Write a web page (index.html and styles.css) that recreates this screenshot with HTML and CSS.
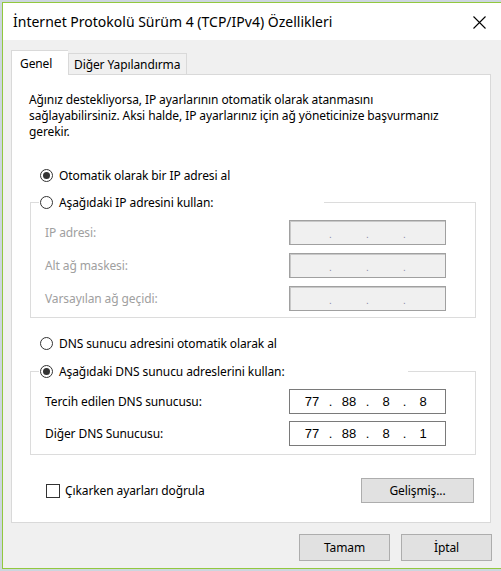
FILE: index.html
```html
<!DOCTYPE html>
<html lang="tr">
<head>
<meta charset="utf-8">
<title>İnternet Protokolü Sürüm 4 (TCP/IPv4) Özellikleri</title>
<link rel="stylesheet" href="styles.css">
</head>
<body>
<div class="window">
  <div class="titlebar">
    <span class="title">İnternet Protokolü Sürüm 4 (TCP/IPv4) Özellikleri</span>
    <svg class="close" width="13" height="13" viewBox="0 0 13 13"><path d="M0.5 0.5L12.5 12.5M12.5 0.5L0.5 12.5" stroke="#000" stroke-width="1.1" fill="none"/></svg>
  </div>
  <div class="client">
    <div class="tabs">
      <div class="tab active">Genel</div>
      <div class="tab">Diğer Yapılandırma</div>
    </div>
    <div class="pane">
      <p class="intro">Ağınız destekliyorsa, IP ayarlarının otomatik olarak atanmasını<br>sağlayabilirsiniz. Aksi halde, IP ayarlarınız için ağ yöneticinize başvurmanız<br>gerekir.</p>

      <label class="radio-row first"><span class="radio checked"></span><span>Otomatik olarak bir IP adresi al</span></label>

      <div class="group-head">
        <span class="seg-left"></span>
        <label class="radio-row legend legend-ip"><span class="radio"></span><span>Aşağıdaki IP adresini kullan:</span></label>
        <span class="seg-right"></span>
      </div>
      <div class="group-body ip-body">
        <div class="field-row disabled"><span>IP adresi:</span><div class="ipbox off"><span class="oct"></span><span class="dot">.</span><span class="oct"></span><span class="dot">.</span><span class="oct"></span><span class="dot">.</span><span class="oct"></span></div></div>
        <div class="field-row disabled"><span>Alt ağ maskesi:</span><div class="ipbox off"><span class="oct"></span><span class="dot">.</span><span class="oct"></span><span class="dot">.</span><span class="oct"></span><span class="dot">.</span><span class="oct"></span></div></div>
        <div class="field-row disabled"><span>Varsayılan ağ geçidi:</span><div class="ipbox off"><span class="oct"></span><span class="dot">.</span><span class="oct"></span><span class="dot">.</span><span class="oct"></span><span class="dot">.</span><span class="oct"></span></div></div>
      </div>

      <label class="radio-row dns-auto"><span class="radio"></span><span>DNS sunucu adresini otomatik olarak al</span></label>

      <div class="group-head dns-head">
        <span class="seg-left"></span>
        <label class="radio-row legend legend-dns"><span class="radio checked"></span><span>Aşağıdaki DNS sunucu adreslerini kullan:</span></label>
        <span class="seg-right"></span>
      </div>
      <div class="group-body dns-body">
        <div class="field-row"><span>Tercih edilen DNS sunucusu:</span><div class="ipbox"><span class="oct">77</span><span class="dot">.</span><span class="oct">88</span><span class="dot">.</span><span class="oct">8</span><span class="dot">.</span><span class="oct">8</span></div></div>
        <div class="field-row"><span>Diğer DNS Sunucusu:</span><div class="ipbox"><span class="oct">77</span><span class="dot">.</span><span class="oct">88</span><span class="dot">.</span><span class="oct">8</span><span class="dot">.</span><span class="oct">1</span></div></div>
      </div>

      <div class="bottom-row">
        <label class="check-row"><span class="checkbox"></span><span>Çıkarken ayarları doğrula</span></label>
        <button class="btn adv">Gelişmiş...</button>
      </div>
    </div>
    <div class="dialog-buttons">
      <button class="btn ok">Tamam</button>
      <button class="btn ok">İptal</button>
    </div>
  </div>
</div>
</body>
</html>
```

FILE: styles.css
```css
* { box-sizing: border-box; }
html, body { margin: 0; padding: 0; }
body {
  width: 501px;
  height: 571px;
  overflow: hidden;
  background: #cdd6df;
  font-family: "Noto Sans", "DejaVu Sans", sans-serif;
  font-size: 12px;
  letter-spacing: -0.1px;
  color: #000;
}
.window {
  margin: 2px 0 0 2px;
  width: 510px;
  height: 567px;
  border-left: 1px solid #92c83e;
  border-top: 1px solid #92c83e;
  border-bottom: 1px solid #92c83e;
  background: #f0f0f0;
}
.titlebar {
  height: 37px;
  background: #fff;
  display: flex;
  align-items: center;
  padding-left: 10px;
  position: relative;
}
.title {
  font-size: 14px;
  letter-spacing: 0;
  margin-top: -1px;
}
.close {
  position: absolute;
  left: 470px;
  top: 13px;
}
.client {
  padding: 10px 0 0 8px;
  width: 490px;
}
.tabs {
  display: flex;
  align-items: flex-end;
  height: 24px;
  position: relative;
  z-index: 1;
}
.tab {
  height: 21px;
  border: 1px solid #d9d9d9;
  border-bottom: none;
  background: #f0f0f0;
  padding: 2px 6px 0 5px;
  white-space: nowrap;
}
.tab.active {
  height: 25px;
  width: 57px;
  background: #fff;
  padding: 4px 0 0 8px;
  border-right: none;
  margin-bottom: -1px;
}
.pane {
  width: 480px;
  height: 449px;
  border: 1px solid #d9d9d9;
  background: #fff;
  padding: 17px 0 0 0;
}
.intro {
  margin: 0 0 0 17px;
  line-height: 16px;
  white-space: nowrap;
}
.radio-row {
  display: flex;
  align-items: center;
  height: 18px;
  white-space: nowrap;
}
.radio-row.first { margin: 26px 0 0 28px; }
.radio {
  width: 13px;
  height: 13px;
  border: 1px solid #333;
  border-radius: 50%;
  background: #fff;
  margin-right: 6px;
  display: flex;
  align-items: center;
  justify-content: center;
  flex: none;
}
.radio.checked::after {
  content: "";
  width: 7px;
  height: 7px;
  border-radius: 50%;
  background: #333;
}
.group-head {
  display: flex;
  height: 18px;
  margin: 9px 0 0 18px;
  width: 446px;
}
.seg-left {
  width: 9px;
  margin-top: 9px;
  border-left: 1px solid #dcdcdc;
  border-top: 1px solid #dcdcdc;
  margin-right: 1px;
}
.seg-right {
  flex: 1;
  margin-top: 9px;
  border-top: 1px solid #dcdcdc;
  border-right: 1px solid #dcdcdc;
}
.legend-ip { width: 284px; }
.legend-dns { width: 368px; }
.group-body {
  margin-left: 18px;
  width: 446px;
  border: 1px solid #dcdcdc;
  border-top: none;
  padding: 9px 29px 6px 14px;
  display: flex;
  flex-direction: column;
  gap: 8px;
}
.field-row {
  display: flex;
  align-items: center;
  justify-content: space-between;
  height: 25px;
}
.field-row.disabled { color: #a0a0a0; }
.ipbox {
  width: 157px;
  height: 25px;
  border: 1px solid #7a7a7a;
  background: #fff;
  display: flex;
  align-items: center;
  padding-left: 7px;
  font-family: "Liberation Sans", Arial, sans-serif;
  font-size: 13px;
  letter-spacing: 0;
}
.ipbox.off {
  background: #f0f0f0;
  border: 1px solid #a0a0a0;
  box-shadow: inset 1px 1px 0 #c8c8c8;
  color: #8a8aa8;
}
.oct {
  width: 30px;
  text-align: center;
}
.dot {
  width: 7px;
  text-align: center;
}
.ipbox.off .dot { font-size: 10px; margin-top: 4px; }
.dns-auto { margin: 16px 0 0 28px; }
.dns-head { margin-top: 10px; }
.dns-body {
  padding-top: 9px;
  padding-bottom: 8px;
  gap: 7px;
}
.bottom-row {
  display: flex;
  align-items: center;
  justify-content: space-between;
  margin: 23px 0 0 34px;
  width: 428px;
  height: 25px;
}
.check-row {
  display: flex;
  align-items: center;
  white-space: nowrap;
}
.checkbox {
  width: 14px;
  height: 14px;
  border: 1px solid #333;
  background: #fff;
  margin-right: 5px;
}
.btn {
  font-family: inherit;
  font-size: 12px;
  letter-spacing: -0.1px;
  color: #000;
  background: #e1e1e1;
  border: 1px solid #adadad;
  padding: 0;
  margin: 0;
}
.adv { width: 113px; height: 25px; }
.dialog-buttons {
  display: flex;
  justify-content: flex-end;
  gap: 11px;
  padding-top: 11px;
  width: 481px;
}
.ok { width: 91px; height: 27px; }
```
